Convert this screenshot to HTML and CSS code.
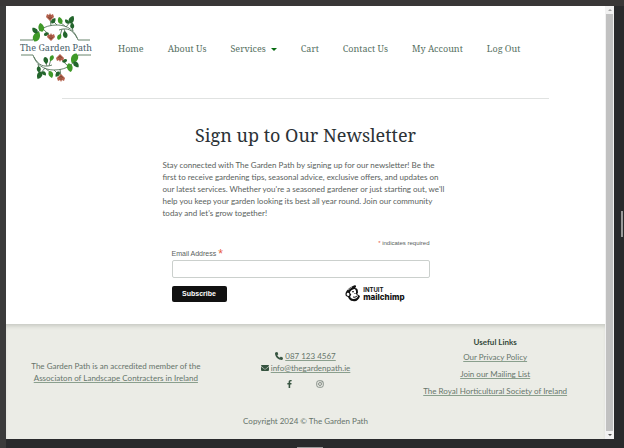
FILE: index.html
```html
<!DOCTYPE html>
<html lang="en">
<head>
<meta charset="utf-8">
<title>The Garden Path - Newsletter</title>
<link rel="stylesheet" href="styles.css">
</head>
<body>
<div class="window">
<div class="page">
<header class="header">
  <a class="logo" href="#" aria-label="The Garden Path">
    <svg viewBox="0 0 74 72" role="img" aria-hidden="true">
      <defs>
        <path id="leaf" d="M0 4C-4 2-3-3 1-5C4-2 4 3 0 4Z"/>
        <g id="flower"><path d="M0 4L-4 0L-3-3L-1-2L0-4L1-2L3-3L4 0Z" fill="#b4604c"/><path d="M-2 0L0 2L2 0M0-2V2" fill="none" stroke="#7b4a36" stroke-width=".8"/></g>
        <g id="garland">
          <path d="M1 28H14C17 20 24 13 38 13C49 13 56 19 59 28H71M40 18C48 15 54 18 58 26M32 14L31 6M24 17Q29 21 32 26M38 13L34 9M47 15L52 9M47 15L41 10M54 19L53 15M43 17L41 24M45 17L47 22" fill="none" stroke="#57765c" stroke-width=".9"/>
          <g fill="#3f9928">
            <use href="#leaf" transform="translate(17 25) rotate(20) scale(1.2)"/>
            <use href="#leaf" transform="translate(22 16) rotate(-20)"/>
            <use href="#leaf" transform="translate(41 9) rotate(-25) scale(.8)"/>
            <use href="#leaf" transform="translate(40 25) rotate(20) scale(.7)"/>
          </g>
          <g fill="#23652c">
            <use href="#leaf" transform="translate(16 19) rotate(-50) scale(.8)"/>
            <use href="#leaf" transform="translate(34 9) rotate(30) scale(.7)"/>
            <use href="#leaf" transform="translate(52 8) rotate(20) scale(.9)"/>
            <use href="#leaf" transform="translate(53 14) rotate(-10) scale(.7)"/>
            <use href="#leaf" transform="translate(48 10) rotate(-50) scale(.6)"/>
            <use href="#leaf" transform="translate(46 23) rotate(-20) scale(.8)"/>
            <use href="#leaf" transform="translate(27 22) rotate(60) scale(.6)"/>
          </g>
          <use href="#flower" x="31" y="5"/><use href="#flower" x="32" y="25"/>
        </g>
      </defs>
      <use href="#garland"/>
      <use href="#garland" transform="rotate(180 36.500 35.500)"/>
      <text class="logo-text" x="37" y="39" text-anchor="middle">The Garden Path</text>
    </svg>
  </a>
  <nav class="nav" aria-label="Main">
    <a href="#">Home</a>
    <a href="#">About Us</a>
    <a href="#" class="has-menu">Services<span class="caret"></span></a>
    <a href="#">Cart</a>
    <a href="#">Contact Us</a>
    <a href="#">My Account</a>
    <a href="#">Log Out</a>
  </nav>
</header>
<hr class="rule">
<main class="main">
  <h1>Sign up to Our Newsletter</h1>
  <p class="intro">Stay connected with The Garden Path by signing up for our newsletter! Be the first to receive gardening tips, seasonal advice, exclusive offers, and updates on our latest services. Whether you're a seasoned gardener or just starting out, we'll help you keep your garden looking its best all year round. Join our community today and let's grow together!</p>
  <form class="form">
    <p class="required"><span class="star">*</span> indicates required</p>
    <label for="email">Email Address <span class="star">*</span></label>
    <input id="email" type="email" required>
    <div class="actions">
      <button type="submit">Subscribe</button>
      <a class="mailchimp" href="#" aria-label="Intuit Mailchimp">
        <svg class="chimp" viewBox="0 0 16 17" aria-hidden="true">
          <path d="M1 11C-1 8 3 3 8 1C11-1 12 2 10 3C13 3 13 6 13 8L12 9L15 11C14 15 11 17 8 16C5 16 4 14 3 12Z" fill="#111"/>
          <path d="M5 7C6 5 8 4 10 4L11 6L11 9L13 11C12 14 8 15 6 13C4 11 7 10 6 9C5 8 5 8 5 7Z" fill="#fff"/>
          <path d="M2 8C4 7 5 9 4 11C2 11 1 10 2 8Z" fill="#fff"/>
          <path d="M3 6L8 2M7 7Q8 6 9 7M10 8V9M8 12Q10 13 12 11M5 5L9 3" fill="none" stroke="#111" stroke-width="1"/>
          <path d="M3 5L7 2" stroke="#fff" stroke-width=".6"/>
        </svg>
        <span class="brand"><span class="intuit">INTUIT</span><span class="name">mailchimp</span></span>
      </a>
    </div>
  </form>
</main>
<footer class="footer">
  <div class="columns">
    <p class="column member">The Garden Path is an accredited member of the <a href="#">Associaton of Landscape Contracters in Ireland</a></p>
    <div class="column contact">
      <div><svg class="icon" viewBox="0 0 512 512" aria-hidden="true"><path d="M164.900 24.600c-7.700-18.600-28-28.500-47.400-23.200l-88 24C12.100 30.200 0 46 0 64c0 247.400 200.600 448 448 448 18 0 33.800-12.100 38.600-29.500l24-88c5.300-19.400-4.600-39.700-23.200-47.400l-96-40c-16.300-6.800-35.200-2.100-46.300 11.600L304.700 368C234.300 334.700 177.300 277.700 144 207.300l49.300-40.300c13.700-11.200 18.400-30 11.600-46.300z"/></svg> <a href="#">087 123 4567</a></div>
      <div><svg class="icon" viewBox="0 0 512 512" aria-hidden="true"><path d="M48 64a48 48 0 0 0-29 86l218 164q19 14 38 0l218-164a48 48 0 0 0-29-86zM0 176v208a64 64 0 0 0 64 64h384a64 64 0 0 0 64-64V176L294 339q-38 28-76 0z"/></svg> <a href="#">info@thegardenpath.ie</a></div>
      <div class="social">
        <a href="#" aria-label="Facebook"><svg class="icon" viewBox="0 0 320 512"><path d="M279 288l14-93h-89v-60c0-25 12-50 52-50h41V7s-37-7-72-7c-73 0-121 44-121 125v70H23v93h81v224h100V288z"/></svg></a>
        <a href="#" aria-label="Instagram"><svg class="icon insta" viewBox="0 0 16 16"><rect x="1.500" y="1.500" width="13" height="13" rx="4"/><circle cx="8" cy="8" r="3"/><circle cx="12" cy="4" r=".5"/></svg></a>
      </div>
    </div>
    <div class="column links">
      <h2>Useful Links</h2>
      <a href="#">Our Privacy Policy</a>
      <a href="#">Join our Mailing List</a>
      <a href="#">The Royal Horticultural Society of Ireland</a>
    </div>
  </div>
  <p class="copyright">Copyright 2024 © The Garden Path</p>
</footer>
</div>
<div class="scrollbar" aria-hidden="true"><span class="arrow up"></span><span class="thumb"></span><span class="arrow down"></span></div>
</div>
<span class="handle side"></span>
<span class="handle bottom"></span>
</body>
</html>
```
FILE: styles.css
```css
* { box-sizing: border-box; }
body {
  position: relative;
  margin: 0;
  min-height: 100vh;
  padding: 6px 10px 9px 6px;
  display: flex;
  background: linear-gradient(90deg, #3b3b3b 6px, #292a2c 6px);
  font: 8px/12px Lato, "Noto Sans", sans-serif;
  color: #59615c;
}
body::before {
  content: "";
  position: absolute;
  inset: 0 0 auto;
  height: 6px;
  background: #393737;
}
h1, h2, p { margin: 0; }
.window { flex: 1; display: flex; }
.page { flex: 1; display: flex; flex-direction: column; background: #fff; }

.header { display: flex; align-items: center; gap: 24px; padding: 6px 13px 0; }
.logo { width: 74px; }
.logo svg { display: block; width: 100%; overflow: visible; }
.logo-text { font: 9px "Noto Serif", "Liberation Serif", serif; fill: #48606a; }
.nav { display: flex; gap: 24px; padding: 2px 0 0 1px; font: 9px/16px "Noto Serif", "Liberation Serif", serif; }
.nav a { color: #56705f; text-decoration: none; white-space: nowrap; }
.nav .has-menu { display: flex; align-items: center; gap: 5px; }
.caret { border: 3px solid transparent; border-top-color: #076b12; border-bottom: 0; }
.rule { align-self: stretch; margin: 14px 56px 0; border: 0; border-top: 1px solid #e0e2e1; }

.main { width: 286px; margin: 0 auto; padding: 23px 0 22px; }
h1 {
  font: 400 18px/26px "Noto Serif", "Liberation Serif", serif;
  color: #2c3236;
  text-align: center;
  white-space: nowrap;
}
.intro { margin-top: 11px; }
.form { margin: 19px 19px 0 9px; font-family: "Liberation Sans", sans-serif; }
.required { font-size: 6px; line-height: 10px; text-align: right; }
.star { color: #e85c41; }
label { display: block; font-size: 7px; line-height: 12px; }
label .star { font-size: 12px; line-height: 8px; vertical-align: -2px; }
input { display: block; width: 100%; height: 18px; border: 1px solid #cbd0cd; border-radius: 2px; background: #fff; }
.actions { display: flex; justify-content: space-between; align-items: center; margin-top: 7px; padding-right: 25px; }
button {
  width: 55px;
  height: 16px;
  padding: 0;
  border: 0;
  border-radius: 2px;
  background: #111;
  color: #fff;
  font: 700 7px/16px "Liberation Sans", sans-serif;
}
.mailchimp { display: flex; gap: 2px; align-items: center; color: #111; text-decoration: none; }
.chimp { width: 16px; height: 17px; }
.brand { display: flex; flex-direction: column; font-family: Inter, sans-serif; }
.intuit { font-size: 6px; font-weight: 700; line-height: 6px; }
.name { font-size: 8px; font-weight: 800; line-height: 8px; }

.footer { flex: 1; padding: 12px 15px; background: #ebece6; box-shadow: inset 0 4px 4px -2px #c5c7c1; color: #66736a; text-align: center; }
.footer a { color: #66766b; text-decoration-color: #8a9f8d; }
.columns { display: grid; grid-template-columns: repeat(3, 1fr); }
.member { padding: 24px 8px 0; }
.contact { padding-top: 14px; }
.icon { height: 8px; fill: #365440; vertical-align: -1px; }
.insta { fill: none; stroke: #68736b; stroke-width: 1.5; }
.social { display: flex; justify-content: center; gap: 24px; margin-top: 4px; }
.links { display: flex; flex-direction: column; align-items: center; gap: 5px; white-space: nowrap; }
.links h2 { margin-bottom: -2px; font-size: 8px; line-height: 12px; color: #34493a; }
.copyright { margin-top: 18px; }

.scrollbar { width: 9px; display: flex; flex-direction: column; background: #f1f1f1; }
.thumb { flex: 1; margin: 0 1px; background: #c1c1c1; }
.arrow { height: 8px; display: flex; justify-content: center; align-items: center; }
.arrow::before { content: ""; border: 2px solid transparent; }
.up::before { border-bottom-color: #a3a3a3; border-top: 0; }
.down::before { border-top-color: #505050; border-bottom: 0; }
.handle { position: absolute; background: #9a9a9a; }
.side { right: 1px; top: 47%; width: 2px; height: 26px; }
.bottom { bottom: 0; left: 297px; width: 26px; height: 1px; }
```
